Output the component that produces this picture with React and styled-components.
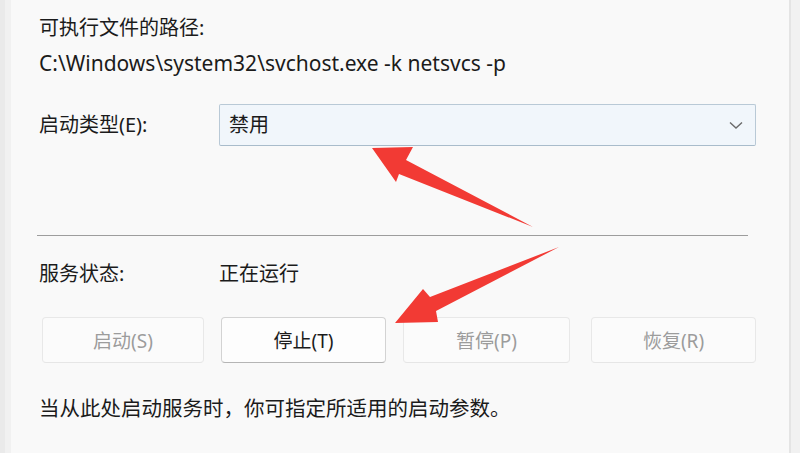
import React from "react";
import styled, { createGlobalStyle } from "styled-components";

const GlobalStyle = createGlobalStyle`
  html, body {
    margin: 0;
    padding: 0;
    background: #ececec;
  }
  body {
    font-family: "Noto Sans", "Noto Sans CJK SC", sans-serif;
    color: #1b1b1b;
  }
`;

const Frame = styled.div`
  width: 800px;
  height: 453px;
  display: flex;
  overflow: hidden;
  background: linear-gradient(to right, #eaeaea 0 5px, #f1f1f1 5px 11px);
`;

const Panel = styled.div`
  position: relative;
  width: 780px;
  height: 453px;
  margin-left: 11px;
  background: #f9f9f9;
  border-right: 2px solid #e4e4e4;
  box-sizing: border-box;
  padding: 16px 0 0 28px;
  display: flex;
  flex-direction: column;
`;

const Text = styled.div`
  font-size: ${(p) => p.$size || 20}px;
  line-height: 24px;
  height: 24px;
  color: #1b1b1b;
  white-space: nowrap;
  margin-top: ${(p) => p.$top || 0}px;
`;

const FieldRow = styled.div`
  display: grid;
  grid-template-columns: 180px 537px;
  align-items: center;
  margin-top: ${(p) => p.$top || 0}px;
`;

const Combo = styled.div`
  height: 42px;
  box-sizing: border-box;
  border: 1px solid #b9c9d6;
  border-bottom-color: #a9bccb;
  border-radius: 2px;
  background: #f1f6fb;
  display: flex;
  align-items: center;
  justify-content: space-between;
  padding: 0 12px 0 9px;
`;

const Divider = styled.hr`
  width: 711px;
  margin: 89px 0 0 -2px;
  border: 0;
  border-top: 1px solid #9d9d9d;
  height: 0;
`;

const ButtonRow = styled.div`
  display: grid;
  grid-template-columns: 162px 165px 167px 169px;
  column-gap: 17px;
  margin-top: 31px;
  margin-left: 3px;
  & > :nth-child(4) {
    margin-left: 4px;
  }
`;

const Button = styled.div`
  height: 46px;
  box-sizing: border-box;
  border-radius: 4px;
  display: flex;
  align-items: center;
  justify-content: center;
  font-size: 19px;
  background: ${(p) => (p.$active ? "#fdfdfd" : "#fbfbfb")};
  border: 1px solid ${(p) => (p.$active ? "#d3d3d3" : "#e8e8e8")};
  border-bottom-color: ${(p) => (p.$active ? "#b5b5b5" : "#e6e6e6")};
  color: ${(p) => (p.$active ? "#1b1b1b" : "#9c9c9c")};
`;

const Overlay = styled.svg`
  position: absolute;
  left: -11px;
  top: 0;
  width: 800px;
  height: 453px;
  pointer-events: none;
`;

const Chevron = () => (
  <svg width="14" height="9" viewBox="0 0 14 9">
    <path d="M1 1.5 L7 7 L13 1.5" fill="none" stroke="#6a6a6a" strokeWidth="1.4" />
  </svg>
);

const App = () => {
  return (
    <Frame>
      <GlobalStyle />
      <Panel>
        <Text>可执行文件的路径:</Text>
        <Text $top={11} $size={21}>
          C:\Windows\system32\svchost.exe -k netsvcs -p
        </Text>
        <FieldRow $top={29}>
          <Text>启动类型(E):</Text>
          <Combo>
            <Text>禁用</Text>
            <Chevron />
          </Combo>
        </FieldRow>
        <Divider />
        <FieldRow $top={26}>
          <Text>服务状态:</Text>
          <Text>正在运行</Text>
        </FieldRow>
        <ButtonRow>
          <Button>启动(S)</Button>
          <Button $active>停止(T)</Button>
          <Button>暂停(P)</Button>
          <Button>恢复(R)</Button>
        </ButtonRow>
        <Text $top={33} $size={20.5}>当从此处启动服务时，你可指定所适用的启动参数。</Text>
        <Overlay viewBox="0 0 800 453">
          <polygon
            points="372,148 413,147 406,160 533,227 399,174 396,182"
            fill="#f23a34"
          />
          <polygon
            points="395,323 423,289 430,297 559,247 436,311 438,322"
            fill="#f23a34"
          />
        </Overlay>
      </Panel>
    </Frame>
  );
};

export default App;
